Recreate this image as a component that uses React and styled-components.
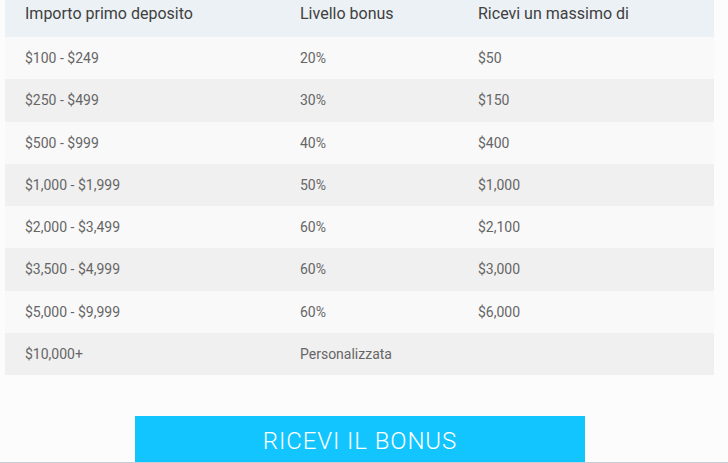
import React from "react";
import styled, { createGlobalStyle } from "styled-components";

const GlobalStyle = createGlobalStyle`
  html, body {
    margin: 0;
    padding: 0;
    background: #fcfcfc;
  }
  body {
    font-family: Roboto, "Liberation Sans", sans-serif;
  }
`;

const Page = styled.div`
  height: 463px;
  box-sizing: border-box;
  border-bottom: 1px solid #c6cdd2;
  overflow: hidden;
  display: flex;
  flex-direction: column;
`;

const Table = styled.div`
  margin-left: 5px;
  width: 709px;
  display: flex;
  flex-direction: column;
`;

const HeadRow = styled.div`
  display: grid;
  grid-template-columns: 275px 178px 1fr;
  height: 37px;
  background: #ecf1f5;
  color: #404040;
  font-size: 16px;
  line-height: 28px;
`;

const Row = styled.div`
  display: grid;
  grid-template-columns: 275px 178px 1fr;
  align-items: center;
  height: 42.25px;
  background: ${(p) => (p.$alt ? "#f0f0f0" : "#f9f9f9")};
  color: #666;
  font-size: 14px;
`;

const Cell = styled.div`
  padding-left: 20px;
`;

const ButtonWrap = styled.div`
  display: flex;
  padding-top: 41px;
  padding-left: 135px;
`;

const BonusButton = styled.button`
  width: 450px;
  height: 46px;
  border: none;
  background: #12c5fe;
  color: #fff;
  font-family: Roboto, "Liberation Sans", sans-serif;
  font-weight: 300;
  font-size: 24px;
  letter-spacing: 0.9px;
  padding: 3px 0 0;
  cursor: pointer;
`;

const rows = [
  ["$100 - $249", "20%", "$50"],
  ["$250 - $499", "30%", "$150"],
  ["$500 - $999", "40%", "$400"],
  ["$1,000 - $1,999", "50%", "$1,000"],
  ["$2,000 - $3,499", "60%", "$2,100"],
  ["$3,500 - $4,999", "60%", "$3,000"],
  ["$5,000 - $9,999", "60%", "$6,000"],
  ["$10,000+", "Personalizzata", ""],
];

export default function App() {
  return (
    <>
      <GlobalStyle />
      <Page>
        <Table>
          <HeadRow>
            <Cell>Importo primo deposito</Cell>
            <Cell>Livello bonus</Cell>
            <Cell>Ricevi un massimo di</Cell>
          </HeadRow>
          {rows.map((r, i) => (
            <Row key={i} $alt={i % 2 === 1}>
              <Cell>{r[0]}</Cell>
              <Cell>{r[1]}</Cell>
              <Cell>{r[2]}</Cell>
            </Row>
          ))}
        </Table>
        <ButtonWrap>
          <BonusButton>RICEVI IL BONUS</BonusButton>
        </ButtonWrap>
      </Page>
    </>
  );
}
